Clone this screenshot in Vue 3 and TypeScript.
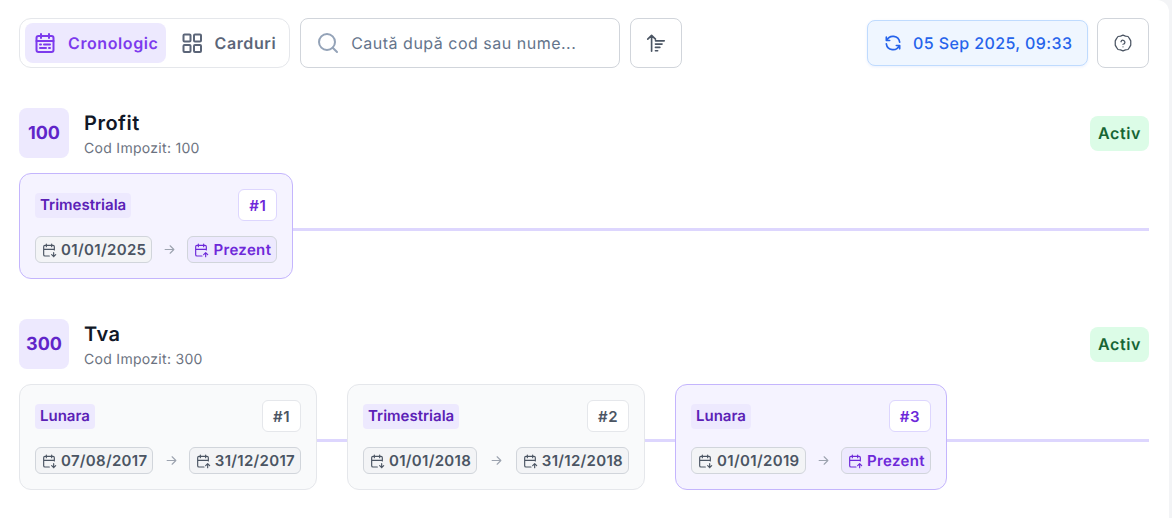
<template>
  <div class="panel">
    <div class="toolbar">
      <div class="segment">
        <button class="seg-btn active">
          <svg class="ic-24" viewBox="0 0 24 24">
            <rect x="3.5" y="5" width="17" height="16" rx="2" />
            <path d="M8 3v4M16 3v4M3.5 10h17M7 13.5h1M11 13.5h6M7 17h6M16 17h1" />
          </svg>
          Cronologic
        </button>
        <button class="seg-btn">
          <svg class="ic-24" viewBox="0 0 24 24">
            <rect x="3.5" y="3.5" width="7" height="7" rx="1" />
            <rect x="14" y="3.5" width="7" height="7" rx="1" />
            <rect x="3.5" y="14" width="7" height="7" rx="1" />
            <rect x="14" y="14" width="7" height="7" rx="1" />
          </svg>
          Carduri
        </button>
      </div>
      <label class="search">
        <svg class="ic-24 search-ic" viewBox="0 0 24 24">
          <circle cx="11" cy="11" r="8" />
          <path d="M21 21l-4.300-4.300" />
        </svg>
        <input type="text" placeholder="Caută după cod sau nume..." />
      </label>
      <button class="icon-btn">
        <svg class="sort-ic" viewBox="0 0 20 20">
          <path d="M6 17.500V3M2.500 6.500L6 3L9.500 6.500M9.500 8h8M9.500 11h6M9.500 14h4M9.500 17h2" />
        </svg>
      </button>
      <div class="spacer"></div>
      <button class="refresh">
        <svg class="ic-20" viewBox="0 0 24 24">
          <path d="M20 11a8.100 8.100 0 0 0-15.500-2M4 5v4h4M4 13a8.100 8.100 0 0 0 15.500 2M20 19v-4h-4" />
        </svg>
        {{ lastSync }}
      </button>
      <button class="icon-btn">
        <svg class="ic-20" viewBox="0 0 24 24">
          <path d="M12 2.500l3 1.200 3 .5 1.800 2.500 1.500 2.800v5l-1.500 2.800-1.800 2.500-3 .5-3 1.200-3-1.200-3-.5-1.800-2.500-1.500-2.800v-5l1.500-2.800 1.800-2.500 3-.5z" />
          <path d="M12 16.500v.01M12 13.500a2.400 2.400 0 1 0-2.400-3" />
        </svg>
      </button>
    </div>

    <section v-for="tax in taxes" :key="tax.code" class="tax">
      <div class="tax-head">
        <div class="code">{{ tax.code }}</div>
        <div class="tax-name">
          <h3>{{ tax.name }}</h3>
          <p>Cod Impozit: {{ tax.code }}</p>
        </div>
        <span class="status">Activ</span>
      </div>
      <div class="timeline">
        <template v-for="(period, i) in tax.periods" :key="i">
          <div class="period" :class="{ current: !period.end }">
            <div class="period-top">
              <span class="freq">{{ period.freq }}</span>
              <span class="index">#{{ i + 1 }}</span>
            </div>
            <div class="period-dates">
              <span class="chip">
                <svg class="ic-16" viewBox="0 0 24 24">
                  <path d="M12.500 21H6a2 2 0 0 1-2-2V7a2 2 0 0 1 2-2h12a2 2 0 0 1 2 2v5M16 3v4M8 3v4M4 11h16M19 16v6M22 19l-3 3-3-3" />
                </svg>
                {{ period.start }}
              </span>
              <svg class="arrow" viewBox="0 0 24 24">
                <path d="M5 12h14M13 6l6 6-6 6" />
              </svg>
              <span class="chip" :class="{ now: !period.end }">
                <svg class="ic-16" viewBox="0 0 24 24">
                  <path d="M13.500 21H6a2 2 0 0 1-2-2V7a2 2 0 0 1 2-2h12a2 2 0 0 1 2 2v5M16 3v4M8 3v4M4 11h16M19 22v-6M22 19l-3-3-3 3" />
                </svg>
                {{ period.end || 'Prezent' }}
              </span>
            </div>
          </div>
          <div class="link" :class="{ last: i === tax.periods.length - 1 }"></div>
        </template>
      </div>
    </section>
  </div>
</template>

<script setup lang="ts">
interface Period {
  freq: string
  start: string
  end: string | null
}

interface Tax {
  code: number
  name: string
  periods: Period[]
}

const lastSync = '05 Sep 2025, 09:33'

const taxes: Tax[] = [
  {
    code: 100,
    name: 'Profit',
    periods: [{ freq: 'Trimestriala', start: '01/01/2025', end: null }],
  },
  {
    code: 300,
    name: 'Tva',
    periods: [
      { freq: 'Lunara', start: '07/08/2017', end: '31/12/2017' },
      { freq: 'Trimestriala', start: '01/01/2018', end: '31/12/2018' },
      { freq: 'Lunara', start: '01/01/2019', end: null },
    ],
  },
]
</script>

<style>
html,
body {
  background: #f3f4f6;
  overflow: hidden;
}
</style>

<style scoped>
.panel {
  box-sizing: border-box;
  width: 1169px;
  height: 518px;
  padding: 18px 20px 0 19px;
  background: #fff;
  border-top-right-radius: 12px;
  font-family: Inter, 'Liberation Sans', sans-serif;
  text-rendering: geometricPrecision;
  overflow: hidden;
}

svg {
  fill: none;
  stroke: currentColor;
  stroke-width: 2;
  stroke-linecap: round;
  stroke-linejoin: round;
  flex: none;
}

.ic-24 {
  width: 24px;
  height: 24px;
}

.ic-20 {
  width: 20px;
  height: 20px;
}

.ic-16 {
  width: 16px;
  height: 16px;
  stroke-width: 1.75;
}

.sort-ic {
  width: 22px;
  height: 22px;
}

button {
  font-family: inherit;
  text-rendering: inherit;
  background: none;
  border: none;
  cursor: pointer;
}

.toolbar {
  display: flex;
  align-items: center;
  gap: 10px;
  height: 50px;
}

.segment {
  box-sizing: border-box;
  display: flex;
  height: 50px;
  padding: 4px 5px;
  border: 1px solid #e5e7eb;
  border-radius: 12px;
}

.seg-btn {
  display: flex;
  align-items: center;
  gap: 11px;
  padding: 0 7px 0 8px;
  border-radius: 8px;
  font-size: 16px;
  font-weight: 600;
  letter-spacing: 0.6px;
  color: #5b6578;
}

.seg-btn + .seg-btn {
  margin-left: 6px;
  padding-right: 8px;
}

.seg-btn.active {
  background: #ede9fe;
  color: #7c3aed;
}

.search {
  box-sizing: border-box;
  display: flex;
  align-items: center;
  gap: 11px;
  width: 320px;
  height: 50px;
  padding: 0 15px;
  border: 1px solid #d1d5db;
  border-radius: 8px;
}

.search-ic {
  color: #94a3b8;
}

.search input {
  flex: 1;
  min-width: 0;
  border: none;
  outline: none;
  padding: 0;
  font-family: inherit;
  text-rendering: inherit;
  font-size: 16px;
  letter-spacing: 0.5px;
}

.search input::placeholder {
  color: #64748b;
  opacity: 1;
}

.icon-btn {
  box-sizing: border-box;
  display: flex;
  align-items: center;
  justify-content: center;
  width: 52px;
  height: 50px;
  border: 1px solid #d1d5db;
  border-radius: 8px;
  color: #4b5563;
}

.icon-btn svg {
  stroke-width: 1.5;
}

.spacer {
  flex: 1;
}

.refresh {
  box-sizing: border-box;
  display: flex;
  align-items: center;
  gap: 10px;
  width: 221px;
  height: 46px;
  margin-right: -1px;
  padding: 0 15px;
  border: 1px solid #bfdbfe;
  border-radius: 8px;
  background: #eff6ff;
  box-shadow: 0 1px 3px rgba(37, 99, 235, 0.1);
  font-size: 16px;
  font-weight: 500;
  letter-spacing: 0.4px;
  color: #2563eb;
  white-space: nowrap;
}

.tax {
  margin-top: 40px;
}

.tax-head {
  display: flex;
  align-items: center;
  gap: 15px;
}

.code {
  display: flex;
  align-items: center;
  justify-content: center;
  width: 50px;
  height: 50px;
  border-radius: 8px;
  background: #ede9fe;
  color: #6025c9;
  font-size: 18px;
  font-weight: 700;
}

.tax-name {
  flex: 1;
}

.tax-name h3 {
  margin: 1px 0 0;
  font-size: 20px;
  line-height: 28px;
  font-weight: 600;
  letter-spacing: 0.5px;
  color: #111827;
}

.tax-name p {
  margin: 3px 0 0;
  font-size: 14px;
  line-height: 18px;
  letter-spacing: 0.3px;
  color: #6b7280;
}

.status {
  padding: 6px 8px;
  border-radius: 8px;
  background: #dcfce7;
  color: #166534;
  font-size: 16px;
  line-height: 23px;
  font-weight: 600;
  letter-spacing: 0.6px;
}

.timeline {
  display: flex;
  align-items: flex-start;
  margin-top: 15px;
}

.period {
  box-sizing: border-box;
  flex: none;
  min-width: 298px;
  padding: 15px;
  border: 1px solid #e5e7eb;
  border-radius: 12px;
  background: #f9fafb;
}

.period.current {
  min-width: 272px;
  border-color: #c4b5fd;
  background: #f5f3ff;
}

.period-top {
  display: flex;
  align-items: center;
  justify-content: space-between;
  height: 32px;
}

.freq {
  padding: 1px 5px 3px;
  border-radius: 4px;
  background: #ede9fe;
  color: #5b21b6;
  font-size: 15px;
  line-height: 21px;
  font-weight: 600;
}

.index {
  box-sizing: border-box;
  display: flex;
  align-items: center;
  justify-content: center;
  height: 32px;
  padding: 0 10px;
  border: 1px solid #e5e7eb;
  border-radius: 6px;
  background: #fff;
  color: #4b5563;
  font-size: 15px;
  font-weight: 600;
  letter-spacing: 0.5px;
}

.current .index {
  border-color: #ddd6fe;
  color: #6d28d9;
}

.period-dates {
  display: flex;
  align-items: center;
  justify-content: space-between;
  gap: 10px;
  margin-top: 15px;
}

.chip {
  box-sizing: border-box;
  display: flex;
  align-items: center;
  gap: 4px;
  height: 27px;
  padding: 0 5px;
  border: 1px solid #d1d5db;
  border-radius: 6px;
  background: #f3f4f6;
  color: #4b5563;
  font-size: 15px;
  font-weight: 600;
  letter-spacing: 0.3px;
  white-space: nowrap;
}

.current .chip {
  letter-spacing: 0.35px;
}

.chip.now {
  background: #ede9fe;
  color: #6d28d9;
}

.arrow {
  width: 15px;
  height: 15px;
  color: #9ca3af;
  stroke-width: 1.75;
}

.link {
  flex: none;
  width: 30px;
  height: 3px;
  margin-top: 55px;
  background: #ddd6fe;
}

.link.last {
  flex: 1;
}
</style>
